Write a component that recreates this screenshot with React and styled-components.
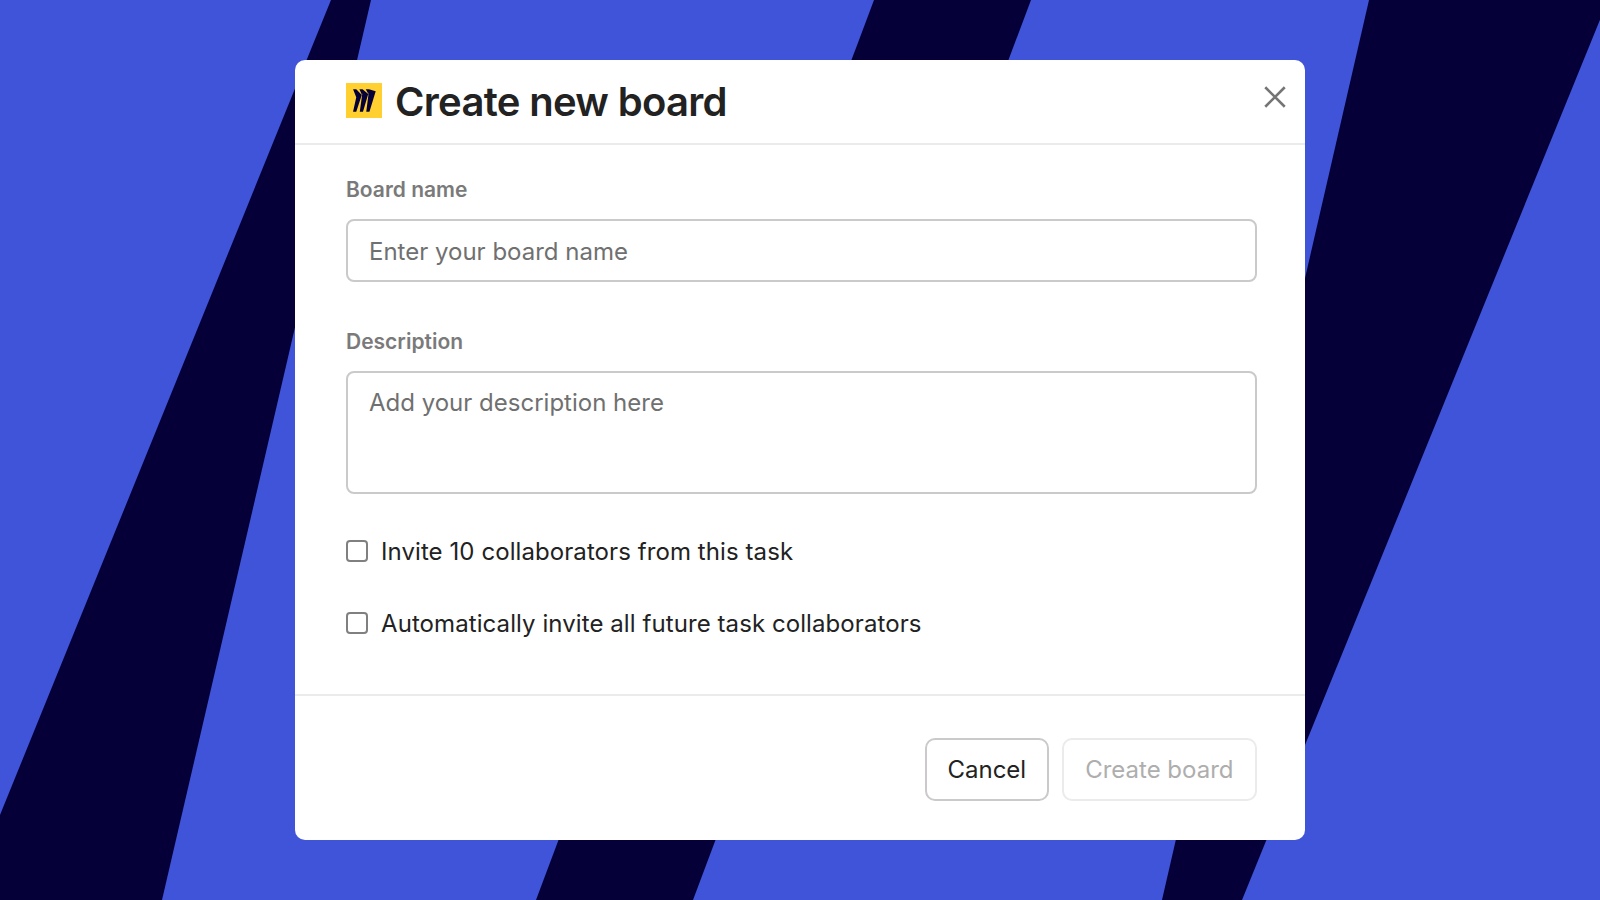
import React from 'react'
import styled, { createGlobalStyle } from 'styled-components'

const Global = createGlobalStyle`
  html, body { margin: 0; padding: 0; }
  body { font-family: Inter, "Liberation Sans", sans-serif; }
  * { box-sizing: border-box; }
`

const App = () => {
  return (
    <Page>
      <Global />
      <Backdrop viewBox="0 0 1600 900" preserveAspectRatio="none">
        <polygon points="331,0 371,0 162,900 0,900 0,815" />
        <polygon points="874,0 1031,0 693,900 536,900" />
        <polygon points="1369,0 1608,0 1242,900 1162,900" />
      </Backdrop>
      <Modal>
        <Header>
          <Logo viewBox="0 0 36 36" preserveAspectRatio="none">
            <rect width="36" height="36" fill="#ffd02f" />
            <path
              fill="#050038"
              transform="translate(3.3 0) scale(0.8 1)"
              d="M24.6 6.4h-4l3.4 5.2-7.4-5.2h-4l3.6 6.5-7.5-6.5h-4l4 8.3-4 14.8h4l7.6-18.9-3.2 18.9h4l7.2-20-3.1 20h4l7.8-20.9z"
            />
          </Logo>
          <Title>Create new board</Title>
          <Close viewBox="0 0 24 24">
            <path d="M3 3l18 18M21 3L3 21" />
          </Close>
        </Header>
        <Body>
          <Label htmlFor="name">Board name</Label>
          <Input id="name" placeholder="Enter your board name" />
          <Label htmlFor="desc" $top={48}>Description</Label>
          <TextArea id="desc" placeholder="Add your description here" />
          <Check $top={42}>
            <Box type="checkbox" />
            Invite 10 collaborators from this task
          </Check>
          <Check $top={42}>
            <Box type="checkbox" />
            Automatically invite all future task collaborators
          </Check>
        </Body>
        <Footer>
          <Button $pad={20.5}>Cancel</Button>
          <Button $pad={21.5} disabled>Create board</Button>
        </Footer>
      </Modal>
    </Page>
  )
}

export default App

const Page = styled.div`
  position: relative;
  display: flex;
  justify-content: center;
  align-items: center;
  width: 100%;
  height: 100vh;
  min-height: 900px;
  overflow: hidden;
  background: #4054d9;
`
const Backdrop = styled.svg`
  position: absolute;
  inset: 0;
  width: 100%;
  height: 100%;
  fill: #050038;
`
const Modal = styled.div`
  position: relative;
  display: flex;
  flex-direction: column;
  width: 1010px;
  height: 780px;
  background: #fff;
  border-radius: 10px;
`
const Header = styled.div`
  display: flex;
  align-items: center;
  height: 85px;
  padding: 0 17px 4px 51px;
  border-bottom: 2px solid #ebebeb;
`
const Logo = styled.svg`
  width: 36px;
  height: 35px;
  margin-top: 1px;
  flex-shrink: 0;
`
const Title = styled.h1`
  margin: 4px 0 0 13px;
  flex: 1;
  font-size: 40px;
  line-height: 48px;
  font-weight: 600;
  letter-spacing: -0.68px;
  color: #222222;
`
const Close = styled.svg`
  width: 26px;
  height: 26px;
  margin-bottom: 6px;
  fill: none;
  stroke: #757575;
  stroke-width: 2.4;
`
const Body = styled.div`
  display: flex;
  flex-direction: column;
  flex: 1;
  padding: 33px 48px 0 51px;
`
const Label = styled.label`
  display: block;
  margin-top: ${(p) => p.$top || 0}px;
  margin-bottom: 17px;
  font-size: 21px;
  line-height: 24px;
  font-weight: 600;
  color: #7a7a7a;
`
const Input = styled.input`
  width: 100%;
  height: 63px;
  padding: 2px 21px 0;
  border: 2px solid #cbc9cb;
  border-radius: 8px;
  outline: none;
  font-family: inherit;
  font-size: 24px;
  color: #222222;
  &::placeholder {
    color: #707070;
    opacity: 1;
  }
`
const TextArea = styled.textarea`
  width: 100%;
  height: 123px;
  padding: 15px 21px;
  border: 2px solid #cbc9cb;
  border-radius: 8px;
  outline: none;
  resize: none;
  font-family: inherit;
  font-size: 24px;
  line-height: 30px;
  color: #222222;
  &::placeholder {
    color: #707070;
    opacity: 1;
  }
`
const Check = styled.label`
  display: flex;
  align-items: center;
  gap: 13px;
  height: 30px;
  margin-top: ${(p) => p.$top}px;
  font-size: 24px;
  letter-spacing: 0.08px;
  color: #222222;
`
const Box = styled.input`
  appearance: none;
  width: 22px;
  height: 22px;
  margin: 0;
  border: 2px solid #808080;
  border-radius: 4px;
  background: #fff;
`
const Footer = styled.div`
  display: flex;
  justify-content: flex-end;
  gap: 13px;
  height: 146px;
  padding: 42px 48px 0 0;
  border-top: 2px solid #ebebeb;
`
const Button = styled.button`
  height: 63px;
  padding: 0 ${(p) => p.$pad}px;
  border: 2px solid ${(p) => (p.disabled ? '#ebebeb' : '#cbc9cb')};
  border-radius: 10px;
  background: #fff;
  font-family: inherit;
  font-size: 24px;
  color: ${(p) => (p.disabled ? '#aeaeae' : '#222222')};
`
